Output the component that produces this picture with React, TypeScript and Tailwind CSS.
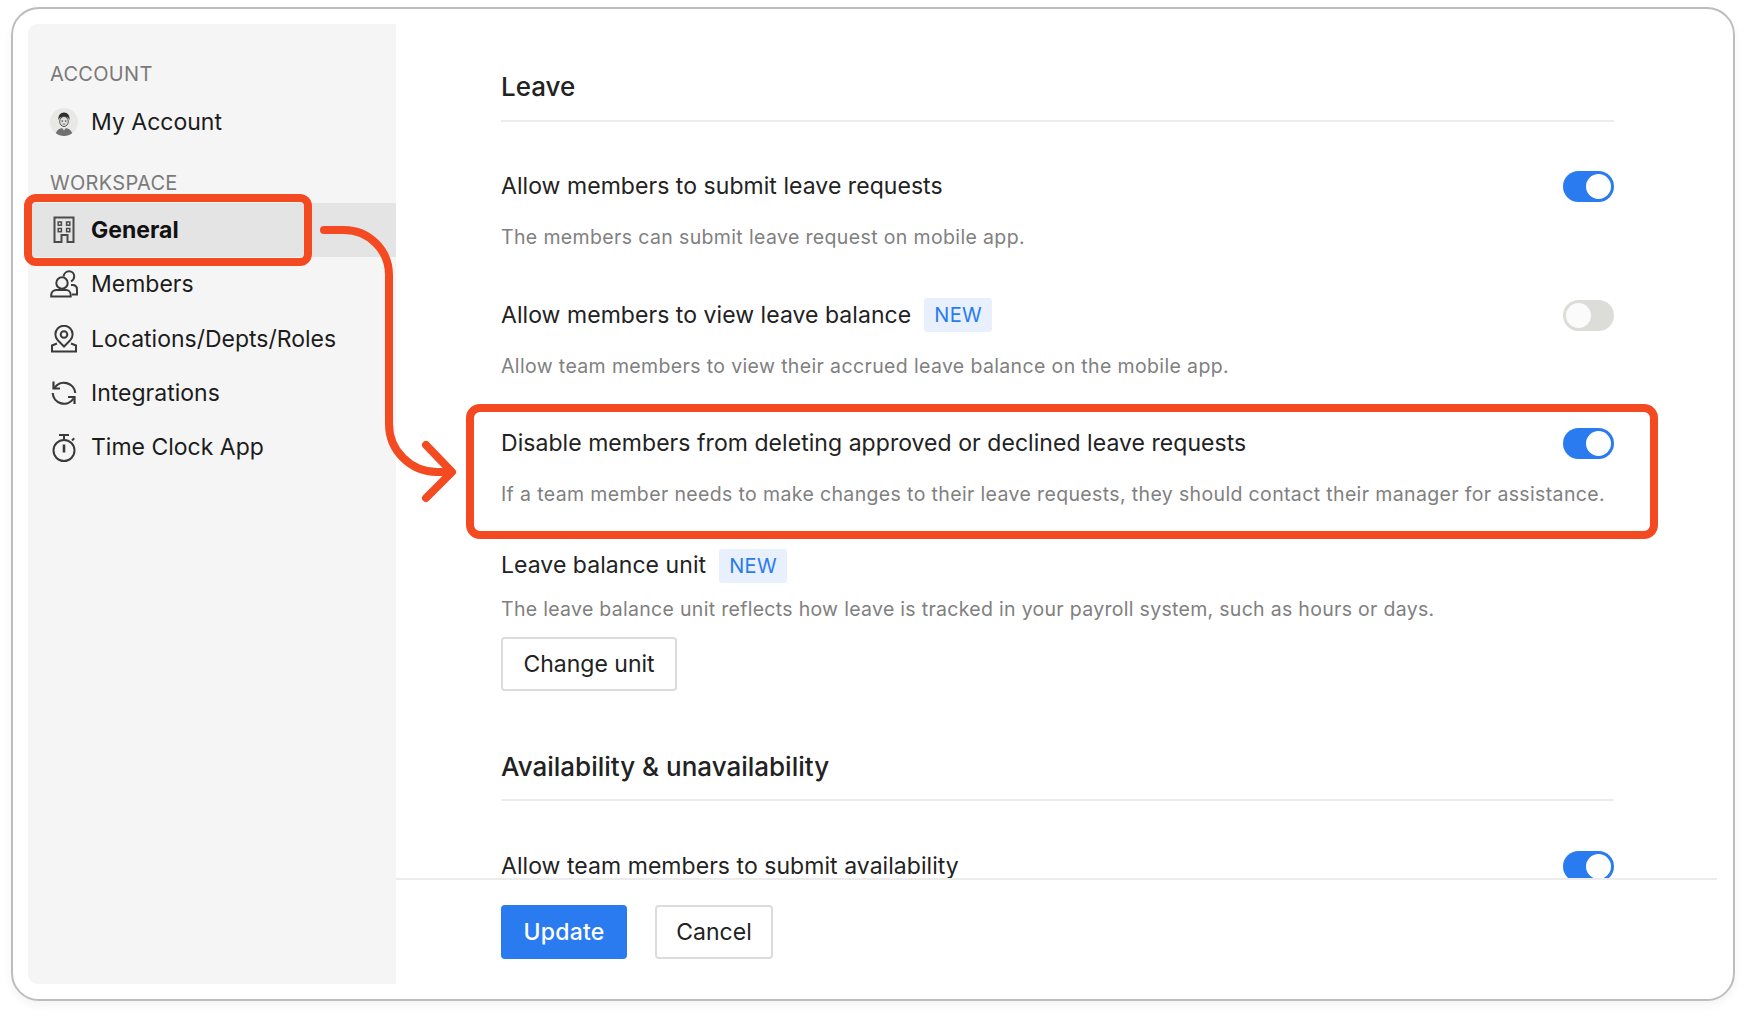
const font = "font-['Inter','Liberation_Sans',sans-serif]";

function Toggle({ on }: { on: boolean }) {
  return (
    <div
      className={
        on
          ? "flex h-[31px] w-[51px] shrink-0 items-center justify-end rounded-full bg-[#2a7bef] pr-[3px]"
          : "flex h-[31px] w-[51px] shrink-0 items-center justify-start rounded-full bg-[#dcdcd9] pl-[3px]"
      }
    >
      <div className={on ? "h-[25px] w-[25px] rounded-full bg-white" : "h-[25px] w-[25px] rounded-full bg-[#fbfbfb]"} />
    </div>
  );
}

function NewBadge() {
  return (
    <span className="flex h-[34px] w-[68px] items-center justify-center rounded-[3px] bg-[#e8f0fd] text-[20px] tracking-[0.3px] text-[#2a7bef]">
      NEW
    </span>
  );
}

function Setting({ title, desc, on, isNew }: { title: string; desc: string; on: boolean; isNew?: boolean }) {
  return (
    <div className="h-[128.5px]">
      <div className="flex h-[31px] items-center justify-between">
        <div className="flex items-center gap-[13px]">
          <span className="text-[23px] tracking-[0.05px] text-[#222]">{title}</span>
          {isNew && <NewBadge />}
        </div>
        <Toggle on={on} />
      </div>
      <p className="mt-[21px] whitespace-nowrap text-[19.5px] leading-[28px] tracking-[0.36px] text-[#808080]">{desc}</p>
    </div>
  );
}

function IconAvatar() {
  return (
    <svg viewBox="0 0 28 28" className="h-[28px] w-[28px]">
      <circle cx="14" cy="14" r="14" fill="#e8e8e5" />
      <path d="M8.500 12c-.6-4.500 2-7.500 5.500-7.500s6.100 3 5.500 7.500l-1.500-2.500h-8z" fill="#2e2e2e" />
      <ellipse cx="14" cy="13.500" rx="4.300" ry="5" fill="#dedcd8" stroke="#444" strokeWidth="0.9" />
      <circle cx="12.300" cy="13" r="0.700" fill="#333" />
      <circle cx="15.700" cy="13" r="0.700" fill="#333" />
      <path d="M12.800 16.200h2.400" stroke="#555" strokeWidth="0.7" />
      <path d="M6 25.500c.8-4 4-5.500 8-5.500s7.200 1.500 8 5.500a14 14 0 0 1-16 0z" fill="#707070" />
      <path d="M12 20l2 2.500 2-2.500z" fill="#e4e4e2" />
    </svg>
  );
}

function IconBuilding() {
  return (
    <svg viewBox="0 0 28 28" fill="none" stroke="#4a4a4a" strokeWidth="2" className="h-[28px] w-[28px]">
      <path d="M4.500 26V1.500h19V26h-6v-7h-6v7z" />
      <rect x="8.200" y="6" width="3.200" height="3.200" strokeWidth="1.500" />
      <rect x="16.600" y="6" width="3.200" height="3.200" strokeWidth="1.500" />
      <rect x="8.200" y="12.500" width="3.200" height="3.200" strokeWidth="1.500" />
      <rect x="16.600" y="12.500" width="3.200" height="3.200" strokeWidth="1.500" />
    </svg>
  );
}

function IconMembers() {
  return (
    <svg viewBox="0 0 28 28" fill="none" stroke="#3a3a3a" strokeWidth="2" className="h-[28px] w-[28px]">
      <circle cx="12" cy="13" r="5.700" />
      <path d="M1.200 26.500v-1.500c0-3 2.500-5 5-5h10c2.500 0 4.500 2 4.500 5v1.500z" />
      <path d="M13.500 6.500C14 3.500 16.500 1.300 19 1.300c3 0 5.200 2.300 5.200 5 0 2.600-1.400 4.200-3.200 5" />
      <path d="M21 15h1.500c2.600 0 4.500 1.800 4.500 4.500v5h-5" />
    </svg>
  );
}

function IconLocation() {
  return (
    <svg viewBox="0 0 28 28" fill="none" stroke="#3a3a3a" strokeWidth="2" className="h-[28px] w-[28px]">
      <path d="M14 21.500 8 15.500A8.600 8.600 0 1 1 20 15.500z" />
      <circle cx="14" cy="9.500" r="3.300" />
      <path d="M7 18.500 2 20.500v6h24v-6l-5-2" />
    </svg>
  );
}

function IconSync() {
  return (
    <svg viewBox="0 0 28 28" fill="none" stroke="#3a3a3a" strokeWidth="2.200" className="h-[28px] w-[28px]">
      <path d="M3.500 2.500v7H10" />
      <path d="M4.500 9A11.300 11.300 0 0 1 25.300 14" />
      <path d="M24.500 25v-7H18" />
      <path d="M23.500 19.500A11.300 11.300 0 0 1 2.700 14" />
    </svg>
  );
}

function IconTimer() {
  return (
    <svg viewBox="0 0 28 28" fill="none" stroke="#3a3a3a" strokeWidth="2" className="h-[28px] w-[28px]">
      <circle cx="14" cy="16.500" r="10.500" />
      <path d="M9 1h10M14 1v4.500M22 6.500l2.200-2.200" />
      <path d="M14 10.500v8" strokeWidth="2.600" />
    </svg>
  );
}

function NavItem({ label, icon, active }: { label: string; icon: React.ReactNode; active?: boolean }) {
  return (
    <div
      className={
        active
          ? "flex h-[54.4px] items-center gap-[13px] bg-[#e4e4e4] pl-[22px] text-[23px] font-bold text-[#111]"
          : "flex h-[54.4px] items-center gap-[13px] pl-[22px] text-[23px] text-[#1c1c1c]"
      }
    >
      {icon}
      <span>{label}</span>
    </div>
  );
}

export default function App() {
  return (
    <div className={`relative h-[1016px] w-[1746px] overflow-hidden bg-white pl-[11px] pt-[7px] ${font}`}>
      <div className="flex h-[994px] w-[1724px] rounded-[28px] border-2 border-[#bdbdbd] pb-[15px] pl-[15px] pr-[16px] pt-[15px] shadow-[0_4px_10px_rgba(0,0,0,0.05)]">
        <aside className="h-full w-[368px] shrink-0 rounded-l-[10px] bg-[#f5f5f5] pt-[37px]">
          <div className="pl-[22px] text-[20px] leading-[26px] tracking-[0.3px] text-[#7a7a7a]">ACCOUNT</div>
          <div className="mt-[8px]">
            <NavItem label="My Account" icon={<IconAvatar />} />
          </div>
          <div className="mt-[21px] pl-[22px] text-[20px] leading-[26px] tracking-[0.3px] text-[#7a7a7a]">WORKSPACE</div>
          <div className="mt-[6.500px]">
            <NavItem label="General" active icon={<IconBuilding />} />
            <NavItem label="Members" icon={<IconMembers />} />
            <NavItem label="Locations/Depts/Roles" icon={<IconLocation />} />
            <NavItem label="Integrations" icon={<IconSync />} />
            <NavItem label="Time Clock App" icon={<IconTimer />} />
          </div>
        </aside>

        <main className="flex min-w-0 flex-1 flex-col">
          <div className="h-[854px] overflow-hidden pl-[105px] pr-[103px] pt-[47px]">
            <h2 className="text-[26px] font-medium leading-[32px] text-[#222]">Leave</h2>
            <div className="mt-[17px] h-[2px] bg-[#ececec]" />
            <div className="mt-[49px]">
              <Setting
                title="Allow members to submit leave requests"
                desc="The members can submit leave request on mobile app."
                on
              />
              <Setting
                title="Allow members to view leave balance"
                desc="Allow team members to view their accrued leave balance on the mobile app."
                on={false}
                isNew
              />
              <Setting
                title="Disable members from deleting approved or declined leave requests"
                desc="If a team member needs to make changes to their leave requests, they should contact their manager for assistance."
                on
              />
            </div>
            <div className="-mt-[8px]">
              <div className="flex h-[34px] items-center gap-[13px]">
                <span className="text-[23px] tracking-[0.05px] text-[#222]">Leave balance unit</span>
                <NewBadge />
              </div>
              <p className="mt-[12px] whitespace-nowrap text-[19.5px] leading-[28px] tracking-[0.3px] text-[#808080]">
                The leave balance unit reflects how leave is tracked in your payroll system, such as hours or days.
              </p>
              <button className="mt-[14px] h-[54px] w-[176px] rounded-[4px] border-2 border-[#dcdcdc] bg-white pt-[1px] text-[23px] text-[#222]">
                Change unit
              </button>
            </div>
            <h2 className="mt-[60px] text-[26px] font-medium leading-[32px] text-[#222]">Availability &amp; unavailability</h2>
            <div className="mt-[16px] h-[2px] bg-[#ececec]" />
            <div className="mt-[50px]">
              <Setting title="Allow team members to submit availability" desc="" on />
            </div>
          </div>
          <div className="flex h-[106px] items-start gap-[28px] border-t-2 border-[#ececec] pl-[105px] pt-[25px]">
            <button className="h-[54px] w-[126px] rounded-[4px] bg-[#2a7bef] pt-[1px] text-[23px] font-medium tracking-[0.2px] text-white">Update</button>
            <button className="h-[54px] w-[118px] rounded-[4px] border-2 border-[#dcdcdc] bg-white pt-[1px] text-[23px] text-[#222]">
              Cancel
            </button>
          </div>
        </main>
      </div>

      <div className="absolute left-[24px] top-[194px] h-[72px] w-[288px] rounded-[12px] border-[8px] border-[#f34a22]" />
      <div className="absolute left-[466px] top-[404px] h-[135px] w-[1192px] rounded-[14px] border-[8px] border-[#f34a22]" />
      <svg className="absolute left-0 top-0 h-[1016px] w-[1746px]" viewBox="0 0 1746 1016" fill="none" stroke="#f34a22" strokeWidth="8" strokeLinecap="round" strokeLinejoin="round">
        <path d="M324 230H344A45 45 0 0 1 389 275V424A48 48 0 0 0 437 472H448" />
        <path d="M426 445 452 472 426 498" />
      </svg>
    </div>
  );
}
